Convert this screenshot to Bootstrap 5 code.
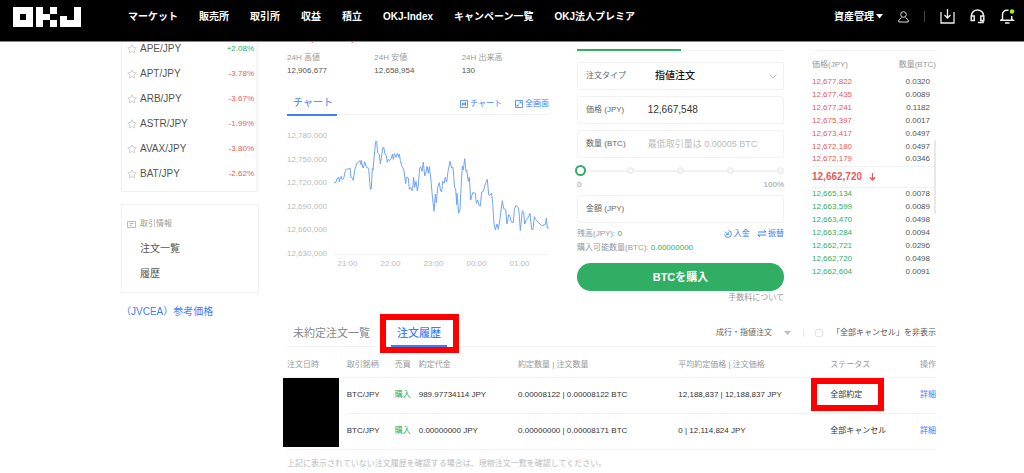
<!DOCTYPE html>
<html lang="ja">
<head>
<meta charset="utf-8">
<meta name="viewport" content="width=device-width, initial-scale=1">
<title>OKJ</title>
<link href="https://cdn.jsdelivr.net/npm/bootstrap@5.3.0/dist/css/bootstrap.min.css" rel="stylesheet">
<style>
:root{--blue:#3d7eff;--green:#2fae64;--red:#e65a5a;--line:#f1f1f1}
body{font-family:"Liberation Sans","Noto Sans CJK JP",sans-serif;font-size:8px;line-height:12px;color:#555;background:#fff}
a{color:inherit;text-decoration:none}
.topbar{height:42px;background:#000;color:#fff;border-bottom:1px solid #888;padding:0 9px 8px 13px;font-size:10px;font-weight:700}
.mainnav{gap:21px;margin-left:47px}
.tools{gap:15px}
.caret{margin-left:2px}
.page{padding:36px 88px 0 121px;gap:28px}
.side{width:138px}
.panel{border:1px solid var(--line)}
.pairs{border-top:0;padding:0 2px 5px 5px;border-right:3px solid #f7f7f7}
.pair{height:25px}
.pair a{font-size:10px;margin-left:3px}
.pair button{border:0;background:none;padding:0;line-height:0}
.info{margin-top:12px;padding:13px 5px 6px}
.info .ttl{margin-bottom:6px}
.info a{font-size:10px;line-height:25px;padding-left:13px}
.jv{font-size:10px;margin-top:13px}
.up{color:var(--green)}.down{color:var(--red)}.blue{color:var(--blue)}
.muted{color:#999}
.main-col{min-width:0}
.cols{gap:28px}
.market{min-width:0}
.order{width:207px}
.book{width:124px}
.price-tail{height:15px}
.stats{grid-template-columns:repeat(3,1fr);line-height:13px}
.charthead{border-bottom:1px solid var(--line);margin-top:15px;height:23px}
.charthead .tab{font-size:10px;border:0;border-bottom:2px solid var(--blue);background:none;color:var(--blue);padding:0 4px 0 6px;height:24px;line-height:16px;margin-bottom:-1px}
.charthead .links{gap:13px;padding-top:6px}
.charthead svg{margin-right:2px}
.chart{margin-top:15px}
.ylabels{width:47px;color:#bbb;height:130px}
.xlabels{color:#bbb;padding-left:39px;margin-top:-2px}
.xlabels span{width:43px;text-align:center}
.plot{height:125px;border-bottom:1px solid var(--line)}
.side-tabs{height:15px;margin-bottom:11px;border-bottom:1px solid var(--line)}
.side-tabs div{width:50%;height:2px;background:var(--green);margin-bottom:-1px}
.field{height:28px;border:1px solid var(--line);border-radius:3px;padding:0 6px 0 8px;margin-bottom:6px}
.field label{width:63px;color:#666}
.field input,.field select{border:0;outline:0;background:transparent;padding:0;min-width:0;font-size:10px;color:#333;appearance:none}
.field select{font-weight:500;color:#111;padding-left:6px}
.field input::placeholder{color:#bbb;font-size:9px}
.slider{height:11px;margin:7px -2px 0}
.slider input{appearance:none;background:transparent;width:100%;height:11px;margin:0;position:relative;z-index:1}
.slider input::-webkit-slider-thumb{appearance:none;width:11px;height:11px;border:2px solid var(--green);border-radius:50%;background:#fff}
.ticks{inset:0 2px}
.ticks::before{content:"";position:absolute;left:3px;right:3px;height:2px;background:#f2f2f2}
.ticks i{width:7px;height:7px;border:2px solid #eee;border-radius:50%;background:#fff;position:relative}
.scale{margin:3px 0 4px}
.balance{line-height:14px}
.buy{height:28px;border-radius:14px;background:var(--green);color:#fff;font-size:11px;font-weight:700;line-height:14px;padding:0;margin-top:8px}
.book table{width:100%}
.book .headline{height:15px;border-bottom:1px solid var(--line);margin-bottom:7px}
.book th{font-weight:400;color:#999;height:17px;padding:0 0 3px}
.book th:last-child{text-align:right}
.book td{height:13px;padding:0;line-height:12px}
.book td:last-child{text-align:right;padding-right:6px}
.book .last td{height:21px;border:solid var(--line);border-width:1px 0;font-size:10px;font-weight:700;text-align:left}
.bar{top:104px;right:0;width:2px;height:74px;background:#e8e8e8;border-radius:2px}
.history{margin-top:14px}
.tabs{height:28px;border-bottom:1px solid var(--line)}
.tabs button{border:0;background:none;padding:0 6px;font-size:11px;line-height:28px;color:#888;height:28px}
.tabs button.on{color:var(--blue);border-bottom:2px solid var(--blue);font-weight:500}
.on-wrap{margin-left:15px}
.filters select{border:0;background:none;appearance:none;color:#666;font-size:8px;padding:0;outline:0}
.filters svg{margin-left:12px}
.filters input{width:8px;height:8px;appearance:none;border:1px solid #e4e4e4;border-radius:2px;margin:0 9px 0 11px}
.filters .sep{width:1px;height:8px;background:#e8e8e8;margin-left:12px}
.ring{border:6px solid red;pointer-events:none}
.ring-tab{left:-11px;right:-12px;top:-5px;height:39px}
.ring-cell{left:-19px;top:-12px;width:73px;height:33px}
.orders{width:100%;table-layout:fixed;color:#333;white-space:nowrap}
.orders th{font-weight:400;color:#999;padding:6px 0 0;height:30px}
.orders td{height:36px;padding:0}
.orders tr{border-bottom:1px solid var(--line)}
.orders td:last-child,.orders th:last-child{text-align:right}
.redact{left:-4px;width:56px;top:0;height:69px;background:#000}
.note{color:#bbb;margin:8px 0 0}
</style>
</head>
<body>
<svg class="d-none" aria-hidden="true"><symbol id="star" viewBox="0 0 10 10"><path d="M5 .8l1.300 2.700 3 .4-2.200 2 .6 3L5 7.500 2.300 8.900l.6-3-2.200-2 3-.4z" fill="none" stroke="#c4c4c4" stroke-width=".8"/></symbol></svg>
<header class="topbar fixed-top d-flex align-items-center">
  <a href="#" aria-label="OKJ"><svg class="d-block" width="68" height="20" viewBox="0 0 68 20" fill="#fff"><path fill-rule="evenodd" d="M0 0h20v20H0zM7 7v6h6V7z"/><path d="M23 0h7v7h7v6h-7v7h-7zM37 0h7v7h-7zM37 13h7v7h-7zM61 0h7v20H47V9h7v4h7z"/></svg></a>
  <nav class="mainnav d-flex text-nowrap">
    <a href="#">マーケット</a><a href="#">販売所</a><a href="#">取引所</a><a href="#">収益</a><a href="#">積立</a><a href="#">OKJ-Index</a><a href="#">キャンペーン一覧</a><a href="#">OKJ法人プレミア</a>
  </nav>
  <div class="tools d-flex align-items-center ms-auto">
    <a href="#" class="d-flex align-items-center text-nowrap">資産管理<svg class="caret" width="7" height="5" viewBox="0 0 7 5" fill="#fff"><path d="M0 0h7L3.500 4.500z"/></svg></a>
    <a href="#" aria-label="アカウント"><svg class="d-block" width="11" height="12" viewBox="0 0 11 12" fill="none" stroke="#ddd"><circle cx="5.500" cy="3.500" r="2.800"/><path d="M3.500 6.500.8 9v2h9.400V9L7.500 6.500"/></svg></a>
    <svg width="1" height="11"><path d="M.5 0v11" stroke="#444"/></svg>
    <a href="#" aria-label="ダウンロード"><svg class="d-block" width="15" height="15" viewBox="0 0 15 15" fill="none" stroke="#eee" stroke-width="1.300"><path d="M1 3v11h13V3M7.500 0v8.500M4.500 6l3 3 3-3"/></svg></a>
    <a href="#" aria-label="サポート"><svg class="d-block" width="15" height="15" viewBox="0 0 15 15" fill="none" stroke="#eee" stroke-width="1.500"><path d="M1.500 7.500V6.500a6 5.500 0 0 1 12 0v1M1.200 7h3v4.500h-3zM10.800 7h3v4.500h-3zM13 11.500v2H8"/></svg></a>
    <a href="#" aria-label="お知らせ"><svg class="d-block" width="15" height="15" viewBox="0 0 15 15" fill="none" stroke="#eee" stroke-width="1.500"><path d="M8.500 1.200H7a4.300 4.300 0 0 0-4.500 4.500V10L1 11.200h12L11.700 10V7M5 14h4.500"/><circle cx="12" cy="2.500" r="2.200" fill="#a6f01e" stroke="none"/></svg></a>
  </div>
</header>

<main class="page d-flex">
  <aside class="side flex-shrink-0">
    <div class="panel pairs">
      <div class="pair d-flex align-items-center"><button type="button" aria-label="お気に入り"><svg width="10" height="10"><use href="#star"/></svg></button><a href="#">APE/JPY</a><span class="up ms-auto">+2.08%</span></div>
      <div class="pair d-flex align-items-center"><button type="button" aria-label="お気に入り"><svg width="10" height="10"><use href="#star"/></svg></button><a href="#">APT/JPY</a><span class="down ms-auto">-3.78%</span></div>
      <div class="pair d-flex align-items-center"><button type="button" aria-label="お気に入り"><svg width="10" height="10"><use href="#star"/></svg></button><a href="#">ARB/JPY</a><span class="down ms-auto">-3.67%</span></div>
      <div class="pair d-flex align-items-center"><button type="button" aria-label="お気に入り"><svg width="10" height="10"><use href="#star"/></svg></button><a href="#">ASTR/JPY</a><span class="down ms-auto">-1.99%</span></div>
      <div class="pair d-flex align-items-center"><button type="button" aria-label="お気に入り"><svg width="10" height="10"><use href="#star"/></svg></button><a href="#">AVAX/JPY</a><span class="down ms-auto">-3.80%</span></div>
      <div class="pair d-flex align-items-center"><button type="button" aria-label="お気に入り"><svg width="10" height="10"><use href="#star"/></svg></button><a href="#">BAT/JPY</a><span class="down ms-auto">-2.62%</span></div>
    </div>
    <div class="panel info">
      <div class="ttl d-flex align-items-center muted"><svg width="9" height="7" viewBox="0 0 9 7" fill="none" stroke="#bbb"><path d="M.5.5h8v6h-8zM2.500 2.500h4M2.500 4.500h2.500"/></svg><span class="ms-1">取引情報</span></div>
      <a class="d-block" href="#">注文一覧</a>
      <a class="d-block" href="#">履歴</a>
    </div>
    <a class="jv d-block blue text-nowrap" href="#">（JVCEA）参考価格</a>
  </aside>

  <div class="main-col flex-grow-1">
    <div class="cols d-flex">
      <section class="market flex-grow-1">
        <div class="price-tail"><svg class="d-block" width="68" height="8" viewBox="0 0 68 8" stroke="#e65a5a" aria-hidden="true"><path d="M26 4l-1 3M66 4l-1 3"/></svg></div>
        <div class="stats d-grid">
          <div><div class="muted">24H 高値</div>12,906,677</div>
          <div><div class="muted">24H 安値</div>12,658,954</div>
          <div><div class="muted">24H 出来高</div>130</div>
        </div>
        <div class="charthead d-flex justify-content-between">
          <button type="button" class="tab">チャート</button>
          <div class="links d-flex blue">
            <a href="#"><svg width="8" height="8" viewBox="0 0 8 8" fill="none" stroke="#3d7eff" stroke-width=".8"><path d="M.5.5h7v7h-7zM2.500 3v3M4 2.500v2.500M5.500 1.800V6M2 4h4"/></svg>チャート</a>
            <a href="#"><svg width="8" height="8" viewBox="0 0 8 8" fill="none" stroke="#3d7eff" stroke-width=".8"><path d="M.5.5h7v7h-7zM4.500 2H6v1.500M6 2 4.500 3.500M3.500 6H2V4.500M2 6l1.500-1.500"/></svg>全画面</a>
          </div>
        </div>
        <div class="chart d-flex">
          <div class="ylabels d-flex flex-column justify-content-between flex-shrink-0"><span>12,780,000</span><span>12,750,000</span><span>12,720,000</span><span>12,690,000</span><span>12,660,000</span><span>12,630,000</span></div>
          <div class="plot flex-grow-1">
            <svg class="d-block w-100 h-100" viewBox="192 120 645 372" preserveAspectRatio="none" fill="none" stroke="#6fa4fb"><polyline vector-effect="non-scaling-stroke" stroke-linejoin="round" points="192,278 197,278 202,264 206,262 208,276 211,262 213,259 216,268 221,266 225,246 229,238 239,236 240,234 243,262 247,264 250,271 254,240 258,228 262,218 270,212 273,224 274,211 278,232 280,234 284,215 289,232 296,235 301,298 304,296 307,235 309,240 312,205 314,184 317,154 320,154 323,188 328,194 331,222 334,204 338,174 341,171 345,192 349,198 352,217 355,208 358,212 364,206 367,192 370,208 373,191 378,202 382,190 386,202 388,192 391,212 396,230 401,238 404,258 407,281 409,262 415,264 418,298 422,292 426,302 428,296 431,262 434,292 438,274 442,303 445,285 449,235 452,230 456,244 460,216 464,258 468,246 471,229 475,250 478,230 483,272 487,318 492,364 496,312 499,338 503,292 508,278 511,300 515,306 518,274 522,280 526,262 530,276 534,244 540,214 545,234 549,232 554,294 557,296 560,344 561,310 566,370 570,358 573,296 577,228 580,240 584,206 588,244 590,240 595,274 598,262 602,330 608,308 616,310 619,340 623,330 627,346 631,348 635,306 640,304 646,282 652,268 656,314 660,316 665,310 668,340 672,400 676,420 681,402 685,418 690,386 697,332 701,356 707,358 711,402 716,374 720,380 724,396 730,398 733,358 738,346 744,352 747,366 751,422 757,362 761,368 764,402 769,388 773,386 780,370 785,418 789,418 793,380 797,388 806,398 815,407 826,404 829,384 832,414 837,414"/></svg>
          </div>
        </div>
        <div class="xlabels d-flex"><span>21:00</span><span>22:00</span><span>23:00</span><span>00:00</span><span>01:00</span></div>
      </section>

      <form class="order flex-shrink-0">
        <div class="side-tabs d-flex align-items-end"><div></div></div>
        <div class="field d-flex align-items-center"><label for="type">注文タイプ</label><select id="type" class="flex-grow-1"><option>指値注文</option></select><svg width="8" height="5" viewBox="0 0 8 5" fill="none" stroke="#bbb"><path d="M.5.5 4 4 7.500.5"/></svg></div>
        <div class="field d-flex align-items-center"><label for="price">価格 (JPY)</label><input id="price" class="flex-grow-1" value="12,667,548"></div>
        <div class="field d-flex align-items-center"><label for="qty">数量 (BTC)</label><input id="qty" class="flex-grow-1" placeholder="最低取引量は 0.00005 BTC"></div>
        <div class="slider position-relative">
          <div class="ticks position-absolute d-flex justify-content-between align-items-center"><i></i><i></i><i></i><i></i><i></i></div>
          <input class="d-block" type="range" aria-label="数量の割合" min="0" max="100" value="0">
        </div>
        <div class="scale d-flex justify-content-between muted"><span>0</span><span>100%</span></div>
        <div class="field mb-1 d-flex align-items-center"><label for="amount">金額 (JPY)</label><input id="amount" class="flex-grow-1"></div>
        <div class="balance d-flex justify-content-between"><span class="muted">残高(JPY): <span class="up">0</span></span>
          <span class="d-flex gap-2 blue">
            <a href="#"><svg width="8" height="8" viewBox="0 0 8 8" fill="none" stroke="#3d7eff" stroke-width=".9"><path d="M4.500.5a3.500 3.500 0 1 1-4 4M1 1.500l3 3M4.300 2.300v2.300H2"/></svg> 入金</a>
            <a href="#"><svg width="8" height="7" viewBox="0 0 8 7" fill="none" stroke="#3d7eff"><path d="M0 2h8L6 .3M8 5H0l2 1.700"/></svg> 振替</a>
          </span></div>
        <div class="balance muted">購入可能数量(BTC): <span class="up">0.00000000</span></div>
        <button type="button" class="btn buy w-100">BTCを購入</button>
        <div class="balance text-end"><a class="muted" href="#">手数料について</a></div>
      </form>

      <section class="book flex-shrink-0 position-relative">
        <div class="headline"></div>
        <table>
          <thead><tr><th>価格(JPY)</th><th>数量(BTC)</th></tr></thead>
          <tbody>
            <tr><td class="down">12,677,822</td><td>0.0320</td></tr>
            <tr><td class="down">12,677,435</td><td>0.0089</td></tr>
            <tr><td class="down">12,677,241</td><td>0.1182</td></tr>
            <tr><td class="down">12,675,397</td><td>0.0017</td></tr>
            <tr><td class="down">12,673,417</td><td>0.0497</td></tr>
            <tr><td class="down">12,672,180</td><td>0.0497</td></tr>
            <tr><td class="down">12,672,179</td><td>0.0346</td></tr>
            <tr class="last"><td class="down" colspan="2">12,662,720 <svg class="ms-1" width="7" height="8" viewBox="0 0 7 8" fill="none" stroke="#e65a5a" stroke-width="1.300"><path d="M3.500 0v7M.8 4.300 3.500 7l2.700-2.700"/></svg></td></tr>
            <tr><td class="up">12,665,134</td><td>0.0078</td></tr>
            <tr><td class="up">12,663,599</td><td>0.0089</td></tr>
            <tr><td class="up">12,663,470</td><td>0.0498</td></tr>
            <tr><td class="up">12,663,284</td><td>0.0094</td></tr>
            <tr><td class="up">12,662,721</td><td>0.0296</td></tr>
            <tr><td class="up">12,662,720</td><td>0.0498</td></tr>
            <tr><td class="up">12,662,604</td><td>0.0091</td></tr>
          </tbody>
        </table>
        <div class="bar position-absolute"></div>
      </section>
    </div>

    <section class="history">
      <div class="tabs d-flex justify-content-between">
        <div class="d-flex">
          <button type="button">未約定注文一覧</button>
          <div class="on-wrap position-relative"><button type="button" class="on">注文履歴</button><div class="ring ring-tab position-absolute"></div></div>
        </div>
        <div class="filters d-flex align-items-center">
          <select aria-label="注文タイプ"><option>成行・指値注文</option></select><svg width="7" height="4" viewBox="0 0 7 4" fill="#bbb"><path d="M0 0h7L3.500 4z"/></svg>
          <span class="sep"></span><input type="checkbox" id="hide"><label for="hide">「全部キャンセル」を非表示</label>
        </div>
      </div>
      <table class="orders">
        <colgroup><col style="width:9.2%"><col style="width:7.4%"><col style="width:3.7%"><col style="width:15.3%"><col style="width:24.7%"><col style="width:23.4%"><col style="width:11.3%"><col style="width:5%"></colgroup>
        <thead><tr><th>注文日時</th><th>取引銘柄</th><th>売買</th><th>約定代金</th><th>約定数量 | 注文数量</th><th>平均約定価格 | 注文価格</th><th>ステータス</th><th>操作</th></tr></thead>
        <tbody>
          <tr><td rowspan="2" class="position-relative"><div class="redact position-absolute"></div></td><td>BTC/JPY</td><td class="up">購入</td><td>989.97734114 JPY</td><td>0.00008122 | 0.00008122 BTC</td><td>12,188,837 | 12,188,837 JPY</td><td><span class="position-relative">全部約定<span class="ring ring-cell position-absolute"></span></span></td><td><a class="blue" href="#">詳細</a></td></tr>
          <tr><td>BTC/JPY</td><td class="up">購入</td><td>0.00000000 JPY</td><td>0.00000000 | 0.00008171 BTC</td><td>0 | 12,114,824 JPY</td><td>全部キャンセル</td><td><a class="blue" href="#">詳細</a></td></tr>
        </tbody>
      </table>
      <p class="note">上記に表示されていない注文履歴を確認する場合は、現物注文一覧を確認してください。</p>
    </section>
  </div>
</main>
<script src="https://cdn.jsdelivr.net/npm/bootstrap@5.3.0/dist/js/bootstrap.bundle.min.js"></script>
</body>
</html>
